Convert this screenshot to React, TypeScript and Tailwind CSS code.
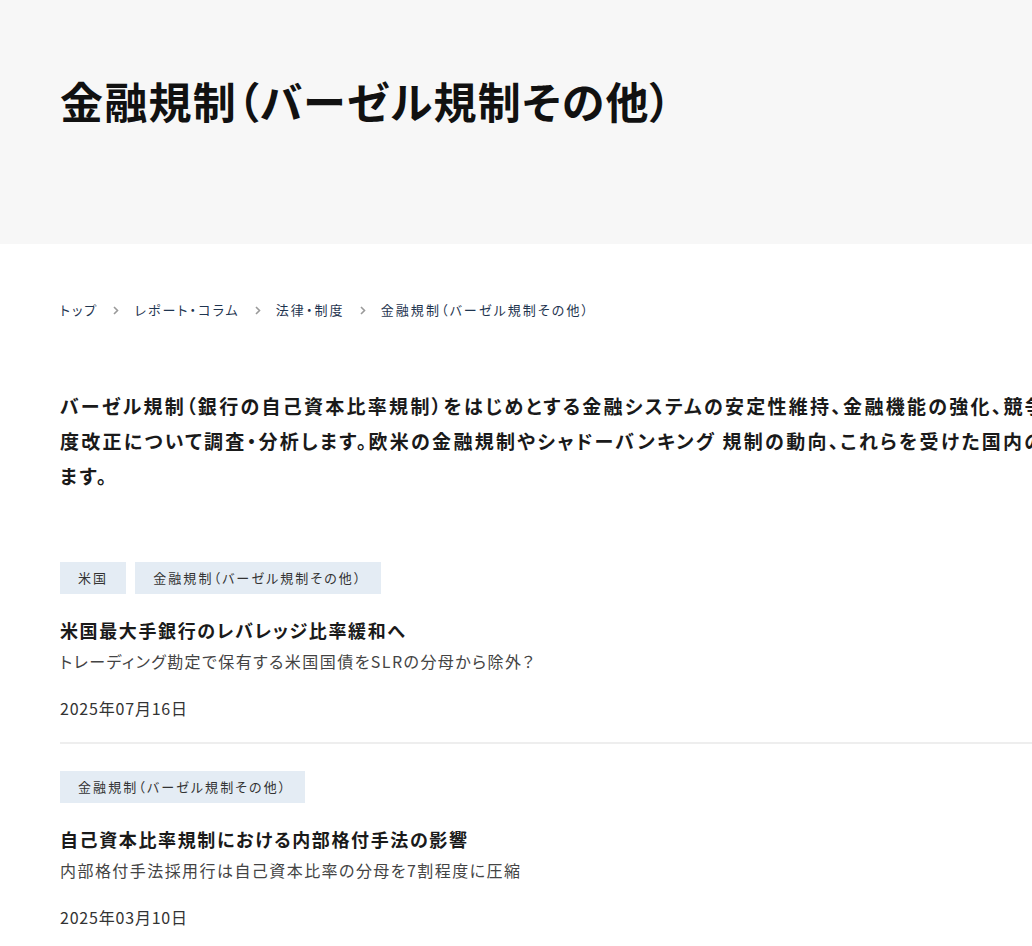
import React from 'react';

const font = { fontFamily: '"Noto Sans CJK JP", "Noto Sans", sans-serif' };

type Article = {
  tags: string[];
  title: string;
  lead: string;
  date: string;
};

const articles: Article[] = [
  {
    tags: ['米国', '金融規制（バーゼル規制その他）'],
    title: '米国最大手銀行のレバレッジ比率緩和へ',
    lead: 'トレーディング勘定で保有する米国国債をSLRの分母から除外？',
    date: '2025年07月16日',
  },
  {
    tags: ['金融規制（バーゼル規制その他）'],
    title: '自己資本比率規制における内部格付手法の影響',
    lead: '内部格付手法採用行は自己資本比率の分母を7割程度に圧縮',
    date: '2025年03月10日',
  },
];

const crumbs = ['トップ', 'レポート・コラム', '法律・制度', '金融規制（バーゼル規制その他）'];

const Chevron = () => (
  <svg width="6" height="9" viewBox="0 0 6 9" className="mx-[15px] shrink-0">
    <path d="M1 1l3.5 3.5L1 8" fill="none" stroke="#9a9a9a" strokeWidth="1.6" />
  </svg>
);

export default function App() {
  return (
    <div
      className="min-h-screen w-full overflow-hidden bg-white text-[#1a1a1a] [font-feature-settings:'palt']"
      style={font}
    >
      <header className="h-[244px] w-full bg-[#f7f7f7]">
        <div className="w-[1200px] px-[60px] pt-[70px]">
          <h1 className="text-[43px] font-bold leading-[60px] tracking-[0.03em] text-[#111]">
            金融規制（バーゼル規制その他）
          </h1>
        </div>
      </header>

      <main className="w-[1200px] px-[60px]">
        <nav className="mt-[56px] flex items-center text-[13px] leading-[20px] tracking-[0.16em] text-[#1f3550]">
          {crumbs.map((c, i) => (
            <React.Fragment key={c}>
              {i > 0 && <Chevron />}
              <span>{c}</span>
            </React.Fragment>
          ))}
        </nav>

        <p className="mt-[68px] whitespace-nowrap text-[19px] font-bold leading-[35px] tracking-[0.12em] text-[#1a1a1a]">
          バーゼル規制（銀行の自己資本比率規制）をはじめとする金融システムの安定性維持、金融機能の強化、競争力向上に向けた制
          <br />
          度改正について調査・分析します。欧米の金融規制やシャドーバンキング 規制の動向、これらを受けた国内の制度改正の影響などを解説し
          <br />
          ます。
        </p>

        <ul className="mt-[69px]">
          {articles.map((a, i) => (
            <li
              key={a.title}
              className={`pb-[21px] ${i > 0 ? 'pt-[27px]' : ''} ${i < articles.length - 1 ? 'border-b-2 border-[#eeeeee]' : ''}`}
            >
              <div className="flex gap-[9px]">
                {a.tags.map((t) => (
                  <span
                    key={t}
                    className="h-[32px] bg-[#e4ecf4] px-[18px] text-[13px] leading-[32px] tracking-[0.16em] text-[#333]"
                  >
                    {t}
                  </span>
                ))}
              </div>
              <h2 className="mt-[23px] text-[18px] font-bold leading-[27px] tracking-[0.09em] text-[#1a1a1a]">
                {a.title}
              </h2>
              <p className="mt-[4px] text-[16px] leading-[26px] tracking-[0.09em] text-[#444]">{a.lead}</p>
              <p className="mt-[21px] text-[16px] leading-[26px] tracking-[0.05em] text-[#333]">{a.date}</p>
            </li>
          ))}
        </ul>
      </main>
    </div>
  );
}
